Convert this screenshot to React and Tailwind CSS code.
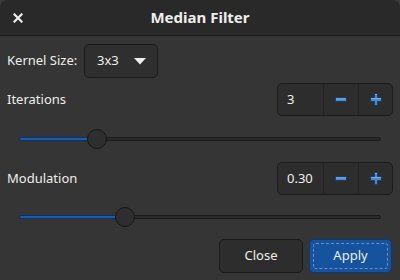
import React from "react";

const font = { fontFamily: '"Noto Sans", "Open Sans", sans-serif' };

function Minus() {
  return (
    <svg width="12" height="5" viewBox="0 0 12 5">
      <rect x="0.5" y="0.5" width="11" height="4" rx="1" fill="#4a88d0" stroke="#1d3a60" />
      <rect x="1" y="1.5" width="10" height="1" fill="#7aaee6" />
    </svg>
  );
}

function Plus() {
  return (
    <svg width="12" height="13" viewBox="0 0 12 13">
      <path
        d="M4.5 0.5 H7.5 V4.5 H11.5 V8.5 H7.5 V12.5 H4.5 V8.5 H0.5 V4.5 H4.5 Z"
        fill="#4a88d0"
        stroke="#1d3a60"
      />
      <rect x="5" y="1" width="2" height="1" fill="#7aaee6" />
      <rect x="1" y="5" width="10" height="1" fill="#7aaee6" />
    </svg>
  );
}

function Spin({ value }) {
  return (
    <div className="flex h-[33px] w-[116px] rounded-[5px] border border-[#1b1b1b] bg-[#2d2d2d] text-[13px] text-[#eeeeec]">
      <div className="flex w-[45px] items-center pl-[9px]">{value}</div>
      <div className="flex w-[35px] items-center justify-center border-l border-[#232323]">
        <Minus />
      </div>
      <div className="flex flex-1 items-center justify-center border-l border-[#232323]">
        <Plus />
      </div>
    </div>
  );
}

function Slider({ pos }) {
  return (
    <div className="relative ml-[19px] flex h-[20px] w-[362px] items-center">
      <div className="h-[4px] w-full rounded-full border border-[#1b1b1b] bg-[#2a2a2a]" />
      <div
        className="absolute left-0 top-[8px] h-[4px] rounded-full border border-[#0c3364] bg-[#1c5cb0]"
        style={{ width: pos }}
      />
      <div
        className="absolute top-0 h-[20px] w-[20px] rounded-full border border-[#161616] bg-[#2e2e2e]"
        style={{ left: pos - 10 }}
      />
    </div>
  );
}

export default function App() {
  return (
    <div className="h-[280px] w-[400px] bg-[#3a3a3a]" style={font}>
      <div className="flex h-[280px] w-[400px] flex-col overflow-hidden rounded-t-[8px] bg-[#353535]">
        <div className="relative flex h-[36px] items-center justify-center border-b border-[#1c1c1c] bg-[#292929]">
          <svg className="absolute left-[13px] top-[13px]" width="10" height="10" viewBox="0 0 10 10">
            <path d="M1.5 1.5 L8.5 8.5 M8.5 1.5 L1.5 8.5" stroke="#eeeeec" strokeWidth="2.2" strokeLinecap="square" />
          </svg>
          <span className="text-[15px] font-bold text-[#eeeeec]">Median Filter</span>
        </div>
        <div className="flex flex-col pt-[8px] text-[13px] text-[#eeeeec]">
          <div className="flex h-[34px] items-center pl-[7px]">
            <span className="w-[77px]">Kernel Size:</span>
            <div className="flex h-[34px] w-[74px] items-center justify-between rounded-[5px] border border-[#1b1b1b] bg-[#2f2f2f] pl-[12px] pr-[11px]">
              <span>3x3</span>
              <svg width="12" height="7" viewBox="0 0 12 7">
                <path d="M0 0 H12 L6 6.5 Z" fill="#eeeeec" />
              </svg>
            </div>
          </div>
          <div className="mt-[5px] flex h-[33px] items-center justify-between pl-[7px] pr-[7px]">
            <span className="self-start leading-[17px] mt-[8px]">Iterations</span>
            <Spin value="3" />
          </div>
          <div className="mt-[13px]">
            <Slider pos={78} />
          </div>
          <div className="mt-[13px] flex h-[33px] items-center justify-between pl-[7px] pr-[7px]">
            <span>Modulation</span>
            <Spin value="0.30" />
          </div>
          <div className="mt-[12px]">
            <Slider pos={106} />
          </div>
          <div className="mt-[12px] flex justify-end gap-[6px] pr-[8px]">
            <div className="flex h-[34px] w-[84px] items-center justify-center rounded-[5px] border border-[#1b1b1b] bg-[#2d2d2d]">
              Close
            </div>
            <div className="flex h-[34px] w-[83px] items-center justify-center rounded-[5px] border border-[#0b3b73] bg-[#15539e] p-[3px]">
              <div className="flex h-full w-full items-center justify-center rounded-[3px] border border-dashed border-[#6a8fc2]">
                Apply
              </div>
            </div>
          </div>
        </div>
      </div>
    </div>
  );
}
